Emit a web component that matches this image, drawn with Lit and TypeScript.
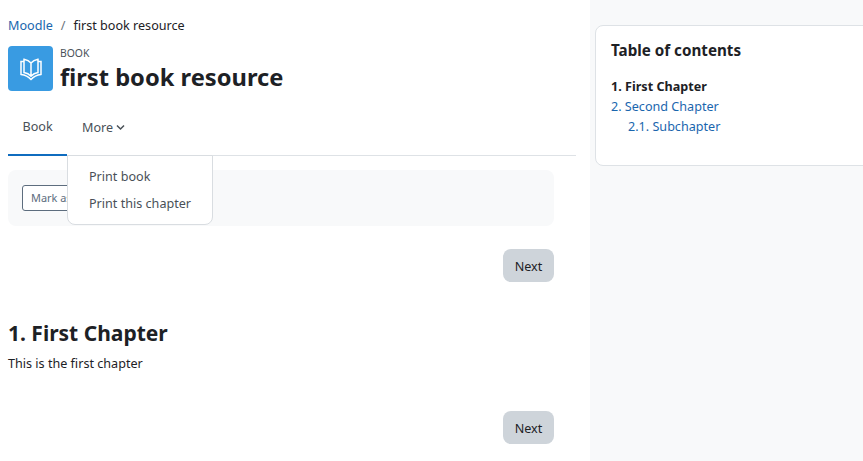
import { LitElement, html, css } from "lit";
import { customElement } from "lit/decorators.js";

@customElement("app-root")
export class AppRoot extends LitElement {
  static styles = css`
    :host { display: block; width: 863px; height: 461px; overflow: hidden; background: #fff; font-family: "Noto Sans", "Open Sans", sans-serif; font-size: 12.6px; color: #1d2125; }
    * { box-sizing: border-box; }
    a { color: #1a66ae; text-decoration: none; }
    .page { display: grid; grid-template-columns: 590px 273px; height: 461px; }
    .main { padding: 16px 14px 0 8px; display: flex; flex-direction: column; min-width: 0; }
    .crumbs { display: flex; gap: 8px; height: 20px; align-items: center; line-height: 20px; }
    .crumbs .sep { color: #6a737b; }
    .head { display: flex; gap: 7px; margin-top: 10px; height: 45px; }
    .icon { width: 45px; height: 45px; border-radius: 4px; background: #399be2; display: flex; align-items: center; justify-content: center; }
    .titles { display: flex; flex-direction: column; }
    .kicker { font-size: 10.4px; color: #495057; line-height: 14px; height: 14px; }
    h1 { margin: 0; font-size: 23.7px; font-weight: 700; line-height: 34px; }
    .tabs { display: flex; margin-top: 14px; height: 51px; border-bottom: 1px solid #dee2e6; width: 568px; position: relative; }
    .tab { padding: 0 15px 7px; display: flex; align-items: center; gap: 3px; color: #495057; height: 51px; }
    .tab.active { width: 59px; padding-left: 14.5px; border-bottom: 2px solid #0f6cbf; margin-bottom: -1px; }
    .menu { position: absolute; left: 59px; top: 50px; width: 146px; height: 70px; background: #fff; border: 1px solid #d9dde1; border-radius: 0 0 8px 8px; padding: 7px 0; z-index: 2; display: flex; flex-direction: column; }
    .menu div { padding-left: 21px; height: 27px; line-height: 27px; color: #495057; white-space: nowrap; }
    .bar { margin-top: 14px; width: 546px; height: 56px; background: #f8f9fa; border-radius: 8px; padding: 15px 14px; }
    .mark { display: inline-flex; align-items: center; width: 120px; height: 26px; padding: 0 8px 2px; font-size: 10.9px; border: 1px solid #5d6d7e; border-radius: 3px; color: #5d6d7e; white-space: nowrap; background: #fff; overflow: hidden; }
    .navrow { width: 546px; display: flex; justify-content: flex-end; }
    .btn { width: 51px; height: 33px; background: #ced4da; border-radius: 8px; display: flex; align-items: center; justify-content: center; color: #1d2125; padding-top: 1px; }
    .n1 { margin-top: 23px; }
    h2 { margin: 36px 0 0; font-size: 21px; font-weight: 700; line-height: 30px; }
    p { margin: 6px 0 0; line-height: 20px; }
    .n2 { margin-top: 37px; }
    .side { background: #f8f9fa; padding: 25px 0 0 5px; }
    .card { height: 141px; margin-right: -10px; background: #fff; border: 1px solid #dee2e6; border-radius: 8px; padding: 14px 15px; }
    .card h3 { margin: 0 0 17px; font-size: 15.2px; font-weight: 700; line-height: 20px; }
    .card div { line-height: 20px; height: 20px; }
    .card .cur { font-weight: 700; }
    .card .sub { padding-left: 17px; }
  `;

  render() {
    return html`<div class="page">
      <div class="main">
        <div class="crumbs"><a>Moodle</a><span class="sep">/</span><span>first book resource</span></div>
        <div class="head">
          <div class="icon">
            <svg width="24" height="24" viewBox="0 0 24 24" fill="none" stroke="#fff" stroke-width="1.5" stroke-linejoin="miter" stroke-linecap="butt">
              <path d="M12 6C10.2 3.9 7.8 2.8 5 2.3V15.6C7.8 16 10.2 17.2 12 19.2C13.8 17.2 16.2 16 19 15.6V2.3C16.2 2.8 13.8 3.9 12 6ZM12 6V19.2" />
              <path d="M5 4.6H2V17.4C6 17.8 9.4 19.4 12 22.4C14.6 19.4 18 17.8 22 17.4V4.6H19" />
            </svg>
          </div>
          <div class="titles">
            <div class="kicker">BOOK</div>
            <h1>first book resource</h1>
          </div>
        </div>
        <div class="tabs">
          <div class="tab active">Book</div>
          <div class="tab more">More
            <svg width="9" height="7" viewBox="0 0 9 7" fill="none" stroke="#495057" stroke-width="1.5"><path d="M1 1.5L4.5 5L8 1.5" /></svg>
          </div>
          <div class="menu"><div>Print book</div><div>Print this chapter</div></div>
        </div>
        <div class="bar"><span class="mark">Mark as done</span></div>
        <div class="navrow n1"><div class="btn">Next</div></div>
        <h2>1. First Chapter</h2>
        <p>This is the first chapter</p>
        <div class="navrow n2"><div class="btn">Next</div></div>
      </div>
      <div class="side">
        <div class="card">
          <h3>Table of contents</h3>
          <div class="cur">1. First Chapter</div>
          <div><a>2. Second Chapter</a></div>
          <div class="sub"><a>2.1. Subchapter</a></div>
        </div>
      </div>
    </div>`;
  }
}
